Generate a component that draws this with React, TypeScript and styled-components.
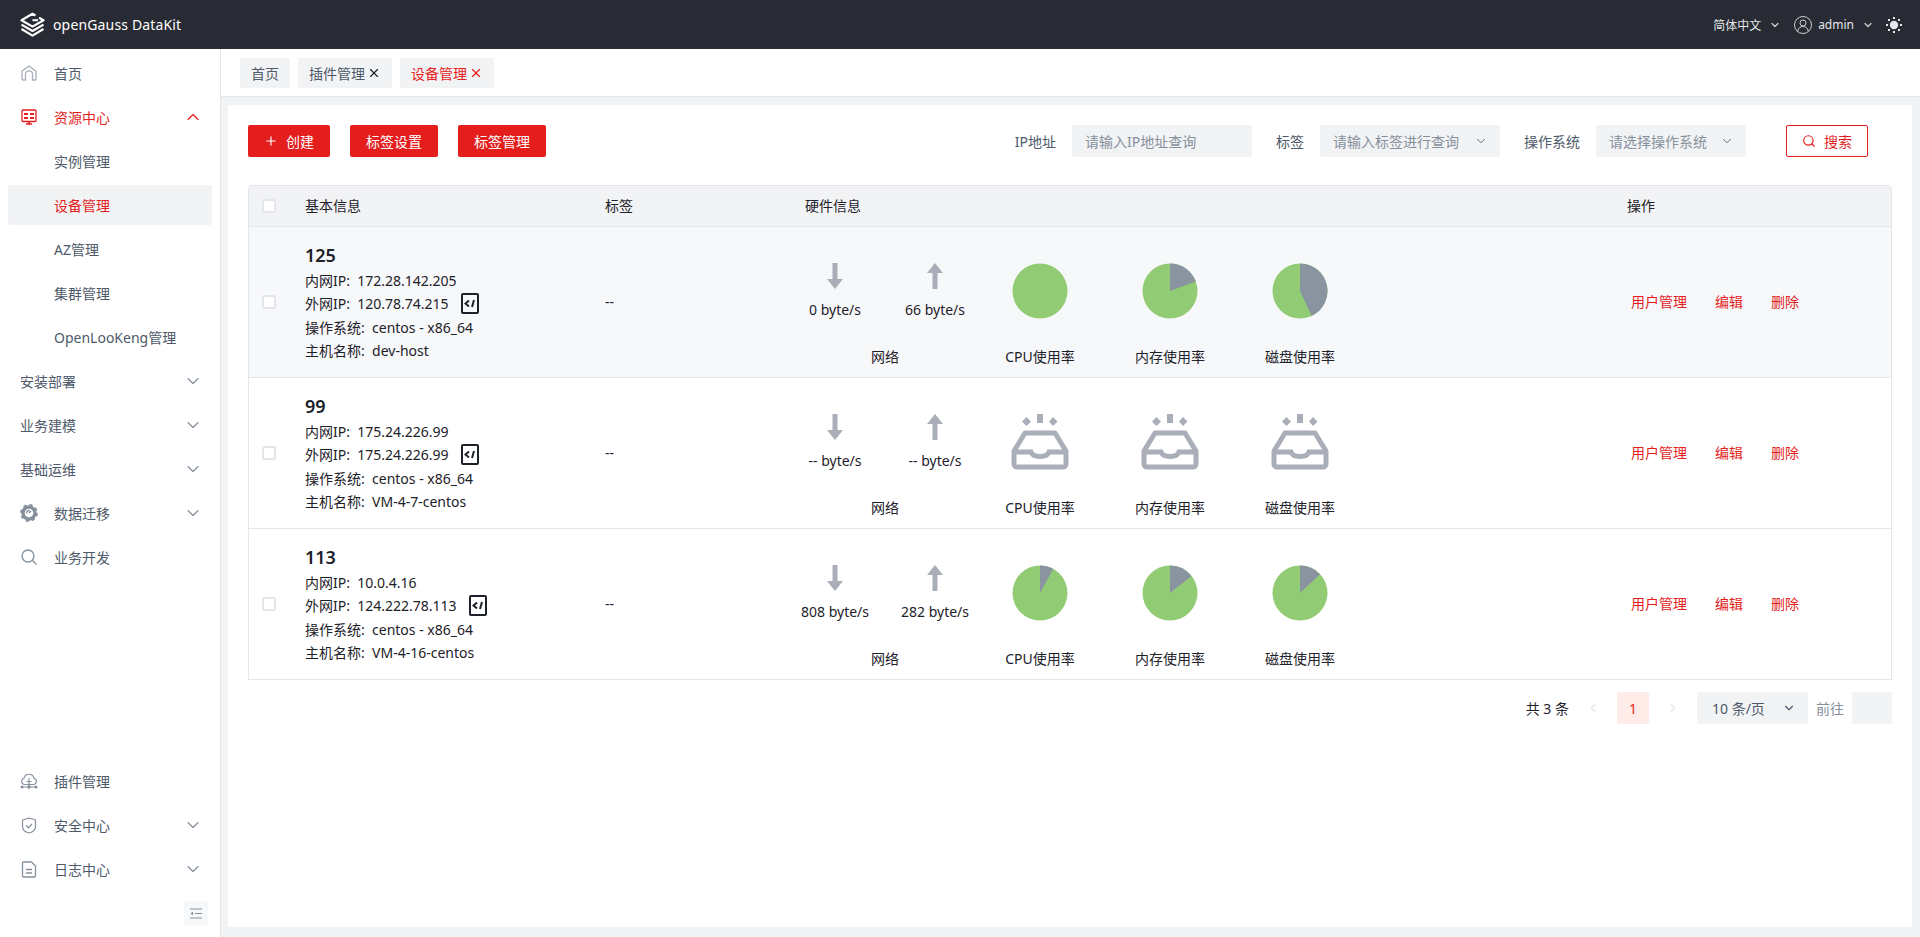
import { ChevronDown, ChevronLeft, ChevronRight, ChevronUp, Plus, Search, X } from "lucide-react";
import { createGlobalStyle, styled } from "styled-components";

const red = "#e41d1d";
const fill = "#f2f3f5";
const line = "#e5e6eb";

const GlobalStyle = createGlobalStyle`
  html, body {
    margin: 0;
    height: 937px;
    overflow: hidden;
    font-family: "Noto Sans", "Noto Sans CJK SC", sans-serif;
    font-size: 14px;
    color: #1d2129;
    background: ${fill};
  }
  * { box-sizing: border-box; }
`;

type Host = {
  id: string;
  inner: string;
  outer: string;
  name: string;
  down: string;
  up: string;
  usage: number[] | null;
};

const hosts: Host[] = [
  { id: "125", inner: "172.28.142.205", outer: "120.78.74.215", name: "dev-host", down: "0", up: "66", usage: [0, 19.4, 43] },
  { id: "99", inner: "175.24.226.99", outer: "175.24.226.99", name: "VM-4-7-centos", down: "--", up: "--", usage: null },
  { id: "113", inner: "10.0.4.16", outer: "124.222.78.113", name: "VM-4-16-centos", down: "808", up: "282", usage: [8, 14.4, 13] },
];

const usageLabels = ["CPU使用率", "内存使用率", "磁盘使用率"];

function Logo() {
  return (
    <svg width="25" height="26" viewBox="0 0 25 26" fill="none" stroke="#fff" strokeWidth="2.2" strokeLinejoin="round">
      <path d="M15.5 3.5 12.5 1.8 1.5 8.2 12.5 14.6 23.5 8.2 19 5.6" />
      <path d="M12.5 8.2H18" strokeWidth="2" />
      <path d="M1.5 12.6 12.5 19 23.5 12.6" />
      <path d="M1.5 17 12.5 23.6 23.5 17" />
    </svg>
  );
}

function HomeIcon() {
  return (
    <svg width="16" height="16" viewBox="0 0 16 16" fill="none" stroke="#a9aeb8" strokeWidth="1.3">
      <path d="M1 6.2 8 .9l7 5.300v7.600c0 .7-.5 1.200-1.200 1.200h-2.300V9.300a3.500 3.500 0 0 0-7 0V15H2.200C1.500 15 1 14.500 1 13.800z" strokeLinejoin="round" />
    </svg>
  );
}

function ResourceIcon() {
  return (
    <svg width="16" height="17" viewBox="0 0 16 17" fill="none" stroke={red} strokeWidth="1.3">
      <rect x="1" y="1" width="14" height="11.5" rx="1" />
      <path d="M3 4h4v2H3zM9 4h4v2H9zM3 8h4v2H3zM9 8h4v2H9z" fill={red} stroke="none" />
      <path d="M5 15h6M8 12.5V15" strokeWidth="1.6" />
    </svg>
  );
}

function GearIcon() {
  return (
    <svg width="18" height="18" viewBox="0 0 18 18" fill="none" stroke="#86909c">
      <circle cx="9" cy="9" r="6" strokeWidth="3.4" />
      <circle cx="9" cy="9" r="7.6" strokeWidth="2.6" strokeDasharray="3 3" />
      <path d="M6.5 9.500a2.600 2.600 0 0 1 3-3M9 9l2-2" strokeWidth="1.4" />
    </svg>
  );
}

function SearchNavIcon() {
  return (
    <svg width="16" height="16" viewBox="0 0 16 16" fill="none" stroke="#86909c" strokeWidth="1.3">
      <circle cx="7" cy="7" r="6" />
      <path d="m11.500 11.500 3.500 3.500" strokeLinecap="round" />
    </svg>
  );
}

function PluginIcon() {
  return (
    <svg width="18" height="16" viewBox="0 0 18 16" fill="none" stroke="#86909c" strokeWidth="1.1">
      <path d="M4.500 11.500a3.200 3.200 0 0 1-.4-6.300 5 5 0 0 1 9.800 0 3.200 3.200 0 0 1-.4 6.300z" />
      <path d="M9 5v9M6.500 8.500h5M1 14h16" />
      <circle cx="2" cy="14" r="1" fill="#86909c" />
      <circle cx="9" cy="14" r="1.200" fill="#86909c" />
      <circle cx="16" cy="14" r="1" fill="#86909c" />
    </svg>
  );
}

function ShieldIcon() {
  return (
    <svg width="16" height="17" viewBox="0 0 16 17" fill="none" stroke="#86909c" strokeWidth="1.200">
      <path d="M8 1 1.500 3v6.500C1.500 13 5 15.200 8 16c3-.8 6.500-3 6.500-6.500V3z" strokeLinejoin="round" />
      <path d="m5 8.500 2.300 2.300L11 7" />
    </svg>
  );
}

function LogIcon() {
  return (
    <svg width="16" height="17" viewBox="0 0 16 17" fill="none" stroke="#86909c" strokeWidth="1.300">
      <path d="M2.500 1h8l4 4v10c0 .6-.4 1-1 1h-11c-.6 0-1-.4-1-1V2c0-.6.4-1 1-1z" />
      <path d="M5 8.500h6M5 12h6" />
    </svg>
  );
}

function CollapseIcon() {
  return (
    <svg width="12" height="11" viewBox="0 0 12 11" fill="none" stroke="#86909c" strokeWidth="1.200">
      <path d="M0 1h12M5 5.500h7M0 10h12" />
      <path d="M3 3.500v4L.5 5.500z" fill="#86909c" stroke="none" />
    </svg>
  );
}

function UserIcon() {
  return (
    <svg width="18" height="18" viewBox="0 0 18 18" fill="none" stroke="#c9cdd4" strokeWidth="1">
      <circle cx="9" cy="9" r="8.500" />
      <circle cx="9" cy="7" r="3" />
      <path d="M3.800 15c.5-3 2.500-4.500 5.200-4.500s4.700 1.500 5.200 4.500" />
    </svg>
  );
}

function SunIcon() {
  return (
    <svg width="16" height="16" viewBox="0 0 16 16" fill="#e5e6eb">
      <circle cx="8" cy="8" r="4.200" />
      <path d="M7 0h2v2H7zM7 14h2v2H7zM0 7h2v2H0zM14 7h2v2h-2zM2 2h2v2H2zM12 2h2v2h-2zM2 12h2v2H2zM12 12h2v2h-2z" />
    </svg>
  );
}

function CodeIcon() {
  return (
    <svg width="18" height="21" viewBox="0 0 18 21" fill="none" stroke="#1d2129">
      <rect x="1" y="1" width="16" height="19" rx="1" strokeWidth="2" />
      <path d="M8 7.500 4.500 10.500 8 13.500" strokeWidth="2" />
      <path d="M13 7 11 14" strokeWidth="2" />
    </svg>
  );
}

function ArrowIcon({ up }: { up?: boolean }) {
  return (
    <svg width="16" height="26" viewBox="0 0 16 26" fill="#a9aeb8">
      <path d={up ? "M8 0 16 10H10.500V26H5.500V10H0Z" : "M8 26 16 16H10.500V0H5.500V16H0Z"} />
    </svg>
  );
}

function Pie({ used }: { used: number }) {
  const angle = (used / 100) * 2 * Math.PI;
  const x = 28 + 27.5 * Math.sin(angle);
  const y = 28 - 27.5 * Math.cos(angle);
  return (
    <svg width="56" height="56" viewBox="0 0 56 56">
      <circle cx="28" cy="28" r="27.5" fill="#91cc75" />
      {used > 0 && <path d={`M28 28V.5A27.5 27.5 0 ${used > 50 ? 1 : 0} 1 ${x} ${y}Z`} fill="#8a93a0" />}
    </svg>
  );
}

function EmptyTray() {
  return (
    <svg width="58" height="56" viewBox="0 0 58 56" fill="none" stroke="#a9aeb8" strokeWidth="5">
      <path d="M11 7.500 15.500 12 20 7.500 15.500 3zM38 7.500 42 12l4.500-4.500L42 3z" fill="#a9aeb8" stroke="none" />
      <path d="M26 0h6v9h-6z" fill="#a9aeb8" stroke="none" />
      <path d="M3 37 14 19H44L55 37V50a3 3 0 0 1-3 3H6a3 3 0 0 1-3-3Z" strokeLinejoin="round" />
      <path d="M3 38H20c2 6 16 6 18 0H55" />
    </svg>
  );
}

function SideEntry({
  icon,
  label,
  open,
  active,
  chevron,
  sub,
}: {
  icon?: React.ReactNode;
  label: string;
  open?: boolean;
  active?: boolean;
  chevron?: boolean;
  sub?: boolean;
}) {
  return (
    <SideItem $active={active} $sub={sub} $open={open}>
      {icon && <SideIconSlot>{icon}</SideIconSlot>}
      <SideLabel>{label}</SideLabel>
      {chevron && (
        <SideChevron>
          {open ? (
            <ChevronUp size={20} strokeWidth={1.4} color={red} />
          ) : (
            <ChevronDown size={20} strokeWidth={1.4} color="#86909c" />
          )}
        </SideChevron>
      )}
    </SideItem>
  );
}

function HostRow({ host, highlighted }: { host: Host; highlighted?: boolean }) {
  return (
    <Row $highlighted={highlighted}>
      <CheckCell>
        <CheckBox />
      </CheckCell>
      <InfoCell>
        <HostId>{host.id}</HostId>
        <InfoLine>内网IP:&nbsp;&nbsp;{host.inner}</InfoLine>
        <InfoLine>
          外网IP:&nbsp;&nbsp;{host.outer}
          <CodeSlot>
            <CodeIcon />
          </CodeSlot>
        </InfoLine>
        <InfoLine>操作系统:&nbsp;&nbsp;centos - x86_64</InfoLine>
        <InfoLine>主机名称:&nbsp;&nbsp;{host.name}</InfoLine>
      </InfoCell>
      <TagCell>--</TagCell>
      <Hardware>
        <NetworkGroup>
          <NetworkPair>
            <Speed>
              <ArrowIcon />
              <SpeedText>{host.down} byte/s</SpeedText>
            </Speed>
            <Speed>
              <ArrowIcon up />
              <SpeedText>{host.up} byte/s</SpeedText>
            </Speed>
          </NetworkPair>
          <MetricLabel>网络</MetricLabel>
        </NetworkGroup>
        {usageLabels.map((label, i) => (
          <Metric key={label}>
            <MetricVisual>{host.usage ? <Pie used={host.usage[i]} /> : <EmptyTray />}</MetricVisual>
            <MetricLabel>{label}</MetricLabel>
          </Metric>
        ))}
      </Hardware>
      <Actions>
        <ActionLink>用户管理</ActionLink>
        <ActionLink>编辑</ActionLink>
        <ActionLink>删除</ActionLink>
      </Actions>
    </Row>
  );
}

export default function App() {
  return (
    <>
      <GlobalStyle />
      <Page>
        <TopBar>
          <Brand>
            <Logo />
            <BrandName>openGauss DataKit</BrandName>
          </Brand>
          <TopTools>
            <TopText>简体中文</TopText>
            <ChevronDown size={12} strokeWidth={2.5} color="#c9cdd4" />
            <UserSlot>
              <UserIcon />
            </UserSlot>
            <TopText>admin</TopText>
            <ChevronDown size={12} strokeWidth={2.5} color="#c9cdd4" />
            <SunSlot>
              <SunIcon />
            </SunSlot>
          </TopTools>
        </TopBar>
        <Body>
          <Sidebar>
            <SideNav>
              <SideEntry icon={<HomeIcon />} label="首页" />
              <SideEntry icon={<ResourceIcon />} label="资源中心" open chevron />
              <SideEntry label="实例管理" sub />
              <SideEntry label="设备管理" sub active />
              <SideEntry label="AZ管理" sub />
              <SideEntry label="集群管理" sub />
              <SideEntry label="OpenLooKeng管理" sub />
              <SideEntry label="安装部署" chevron />
              <SideEntry label="业务建模" chevron />
              <SideEntry label="基础运维" chevron />
              <SideEntry icon={<GearIcon />} label="数据迁移" chevron />
              <SideEntry icon={<SearchNavIcon />} label="业务开发" />
            </SideNav>
            <SideNav>
              <SideEntry icon={<PluginIcon />} label="插件管理" />
              <SideEntry icon={<ShieldIcon />} label="安全中心" chevron />
              <SideEntry icon={<LogIcon />} label="日志中心" chevron />
              <CollapseButton>
                <CollapseIcon />
              </CollapseButton>
            </SideNav>
          </Sidebar>
          <Main>
            <TabBar>
              <Tab>首页</Tab>
              <Tab>
                插件管理
                <X size={14} strokeWidth={2} color="#1d2129" />
              </Tab>
              <Tab $active>
                设备管理
                <X size={14} strokeWidth={2} color={red} />
              </Tab>
            </TabBar>
            <Content>
              <Card>
                <Toolbar>
                  <ButtonGroup>
                    <PrimaryButton>
                      <Plus size={14} color="#fff" />
                      创建
                    </PrimaryButton>
                    <PrimaryButton>标签设置</PrimaryButton>
                    <PrimaryButton>标签管理</PrimaryButton>
                  </ButtonGroup>
                  <Filters>
                    <FilterLabel>IP地址</FilterLabel>
                    <Field $width={180}>
                      <Placeholder>请输入IP地址查询</Placeholder>
                    </Field>
                    <FilterLabel>标签</FilterLabel>
                    <Field $width={180}>
                      <Placeholder>请输入标签进行查询</Placeholder>
                      <ChevronDown size={14} strokeWidth={1.5} color="#4e5969" />
                    </Field>
                    <FilterLabel>操作系统</FilterLabel>
                    <Field $width={150}>
                      <Placeholder>请选择操作系统</Placeholder>
                      <ChevronDown size={14} strokeWidth={1.5} color="#4e5969" />
                    </Field>
                    <SearchButton>
                      <Search size={14} color={red} />
                      搜索
                    </SearchButton>
                  </Filters>
                </Toolbar>
                <Table>
                  <HeadRow>
                    <CheckCell>
                      <CheckBox />
                    </CheckCell>
                    <HeadCell $pad={12}>基本信息</HeadCell>
                    <HeadCell $pad={12}>标签</HeadCell>
                    <HeadCell $pad={20}>硬件信息</HeadCell>
                    <HeadCell $pad={12}>操作</HeadCell>
                  </HeadRow>
                  {hosts.map((host, i) => (
                    <HostRow key={host.id} host={host} highlighted={i === 0} />
                  ))}
                </Table>
                <Pagination>
                  <Total>共 3 条</Total>
                  <PagerArrow>
                    <ChevronLeft size={14} color="#e5e6eb" />
                  </PagerArrow>
                  <PageNumber>1</PageNumber>
                  <PagerArrow>
                    <ChevronRight size={14} color="#e5e6eb" />
                  </PagerArrow>
                  <PageSize>
                    10 条/页
                    <ChevronDown size={14} color="#4e5969" />
                  </PageSize>
                  <JumpLabel>前往</JumpLabel>
                  <JumpBox />
                </Pagination>
              </Card>
            </Content>
          </Main>
        </Body>
      </Page>
    </>
  );
}

const Page = styled.div`
  display: flex;
  flex-direction: column;
  width: 1920px;
  height: 937px;
`;

const TopBar = styled.header`
  display: flex;
  align-items: center;
  justify-content: space-between;
  flex: none;
  height: 49px;
  padding: 0 18px 0 20px;
  background: #282b33;
`;

const Brand = styled.div`
  display: flex;
  align-items: center;
  gap: 8px;
`;

const BrandName = styled.span`
  font-size: 14px;
  letter-spacing: 0.15px;
  color: #fff;
`;

const TopTools = styled.div`
  display: flex;
  align-items: center;
  gap: 8px;
`;

const TopText = styled.span`
  font-size: 12px;
  color: #e5e6eb;
`;

const UserSlot = styled.span`
  display: flex;
  margin-left: 5px;
  margin-right: -2px;
`;

const SunSlot = styled.span`
  display: flex;
  margin-left: 4px;
`;

const Body = styled.div`
  display: flex;
  flex: 1;
  min-height: 0;
`;

const Sidebar = styled.aside`
  display: flex;
  flex: none;
  flex-direction: column;
  justify-content: space-between;
  width: 221px;
  padding: 4px 0 12px;
  border-right: 1px solid ${line};
  background: #fff;
`;

const SideNav = styled.nav`
  display: flex;
  flex-direction: column;
  gap: 4px;
`;

const SideItem = styled.div<{ $active?: boolean; $sub?: boolean; $open?: boolean }>`
  display: flex;
  align-items: center;
  height: 40px;
  margin: 0 8px;
  padding-left: ${({ $sub }) => ($sub ? "46px" : "12px")};
  border-radius: 2px;
  background: ${({ $active }) => ($active ? fill : "transparent")};
  color: ${({ $active, $open }) => ($active || $open ? red : "#4e5969")};
  font-size: 14px;
`;

const SideIconSlot = styled.span`
  display: flex;
  justify-content: center;
  width: 18px;
  margin-right: 16px;
`;

const SideLabel = styled.span`
  flex: 1;
`;

const SideChevron = styled.span`
  display: flex;
  margin-right: 9px;
`;

const CollapseButton = styled.button`
  display: flex;
  align-items: center;
  justify-content: center;
  align-self: flex-end;
  width: 24px;
  height: 24px;
  margin: 8px 12px 0 0;
  padding: 0;
  border: none;
  border-radius: 2px;
  background: #f7f8fa;
`;

const Main = styled.main`
  display: flex;
  flex: 1;
  flex-direction: column;
  min-width: 0;
`;

const TabBar = styled.div`
  display: flex;
  flex: none;
  gap: 8px;
  height: 48px;
  padding: 9px 19px 0;
  border-bottom: 1px solid ${line};
  background: #fff;
`;

const Tab = styled.div<{ $active?: boolean }>`
  display: flex;
  align-items: center;
  gap: 2px;
  height: 30px;
  padding: 0 11px;
  border-radius: 2px;
  background: ${fill};
  color: ${({ $active }) => ($active ? red : "#4e5969")};
  font-size: 14px;
`;

const Content = styled.div`
  flex: 1;
  min-height: 0;
  padding: 8px 8px 10px 7px;
`;

const Card = styled.section`
  height: 100%;
  padding: 20px;
  background: #fff;
`;

const Toolbar = styled.div`
  display: flex;
  align-items: center;
  justify-content: space-between;
  height: 32px;
`;

const ButtonGroup = styled.div`
  display: flex;
  gap: 20px;
`;

const PrimaryButton = styled.button`
  display: flex;
  align-items: center;
  gap: 8px;
  height: 32px;
  padding: 0 16px;
  border: none;
  border-radius: 2px;
  background: ${red};
  color: #fff;
  font: inherit;
`;

const Filters = styled.div`
  display: flex;
  align-items: center;
  margin-right: 24px;
`;

const FilterLabel = styled.span`
  margin: 0 16px 0 24px;
  color: #4e5969;
`;

const Field = styled.div<{ $width: number }>`
  display: flex;
  align-items: center;
  justify-content: space-between;
  width: ${({ $width }) => $width}px;
  height: 32px;
  padding: 0 12px 0 13px;
  border-radius: 2px;
  background: ${fill};
`;

const Placeholder = styled.span`
  flex: none;
  color: #86909c;
  white-space: nowrap;
`;

const SearchButton = styled.button`
  display: flex;
  align-items: center;
  justify-content: center;
  gap: 8px;
  width: 82px;
  height: 32px;
  margin-left: 40px;
  padding: 0;
  border: 1px solid ${red};
  border-radius: 2px;
  background: #fff;
  color: ${red};
  font: inherit;
`;

const Table = styled.div`
  margin-top: 28px;
  border: 1px solid ${line};
  border-bottom: none;
  border-radius: 4px 4px 0 0;
`;

const columns = "44px 300px 192px 830px 1fr";

const HeadRow = styled.div`
  display: grid;
  grid-template-columns: ${columns};
  align-items: center;
  height: 41px;
  border-bottom: 1px solid ${line};
  background: ${fill};
`;

const HeadCell = styled.div<{ $pad: number }>`
  padding-left: ${({ $pad }) => $pad}px;
  padding-bottom: 2px;
`;

const Row = styled.div<{ $highlighted?: boolean }>`
  display: grid;
  grid-template-columns: ${columns};
  align-items: center;
  height: 151px;
  border-bottom: 1px solid ${line};
  background: ${({ $highlighted }) => ($highlighted ? "#f7f8fa" : "#fff")};
`;

const CheckCell = styled.div`
  display: flex;
  justify-content: flex-end;
  padding-right: 17px;
`;

const CheckBox = styled.span`
  width: 14px;
  height: 14px;
  border: 2px solid ${line};
  border-radius: 2px;
  background: #fff;
`;

const InfoCell = styled.div`
  display: flex;
  flex-direction: column;
  padding-left: 12px;
`;

const HostId = styled.div`
  font-size: 18px;
  font-weight: 600;
  line-height: 26px;
`;

const InfoLine = styled.div`
  display: flex;
  align-items: center;
  height: 23.5px;
  white-space: pre;
`;

const CodeSlot = styled.span`
  display: flex;
  margin-left: 12px;
`;

const TagCell = styled.div`
  padding: 0 0 2px 12px;
`;

const Hardware = styled.div`
  display: flex;
  align-self: start;
  padding-top: 36px;
`;

const NetworkGroup = styled.div`
  display: flex;
  flex-direction: column;
  justify-content: space-between;
  align-items: center;
  width: 200px;
  height: 104px;
  margin-right: -10px;
`;

const NetworkPair = styled.div`
  display: flex;
`;

const Speed = styled.div`
  display: flex;
  flex-direction: column;
  align-items: center;
  width: 100px;
`;

const SpeedText = styled.span`
  margin-top: 11px;
  line-height: 20px;
`;

const Metric = styled.div`
  display: flex;
  flex-direction: column;
  justify-content: space-between;
  align-items: center;
  width: 130px;
  height: 104px;
`;

const MetricVisual = styled.div`
  display: flex;
`;

const MetricLabel = styled.span`
  line-height: 20px;
`;

const Actions = styled.div`
  display: flex;
  gap: 28px;
  padding: 0 0 2px 16px;
`;

const ActionLink = styled.span`
  color: ${red};
`;

const Pagination = styled.div`
  display: flex;
  align-items: center;
  justify-content: flex-end;
  height: 32px;
  margin-top: 12px;
`;

const Total = styled.span``;

const PagerArrow = styled.span`
  display: flex;
  justify-content: center;
  width: 48px;
`;

const PageNumber = styled.span`
  display: flex;
  align-items: center;
  justify-content: center;
  width: 32px;
  height: 32px;
  border-radius: 2px;
  background: #ffece8;
  color: ${red};
`;

const PageSize = styled.div`
  display: flex;
  align-items: center;
  justify-content: space-between;
  width: 111px;
  height: 32px;
  padding: 0 12px 0 15px;
  border-radius: 2px;
  background: ${fill};
  color: #4e5969;
`;

const JumpLabel = styled.span`
  margin: 0 8px;
  color: #86909c;
`;

const JumpBox = styled.span`
  width: 40px;
  height: 32px;
  border-radius: 2px;
  background: ${fill};
`;
